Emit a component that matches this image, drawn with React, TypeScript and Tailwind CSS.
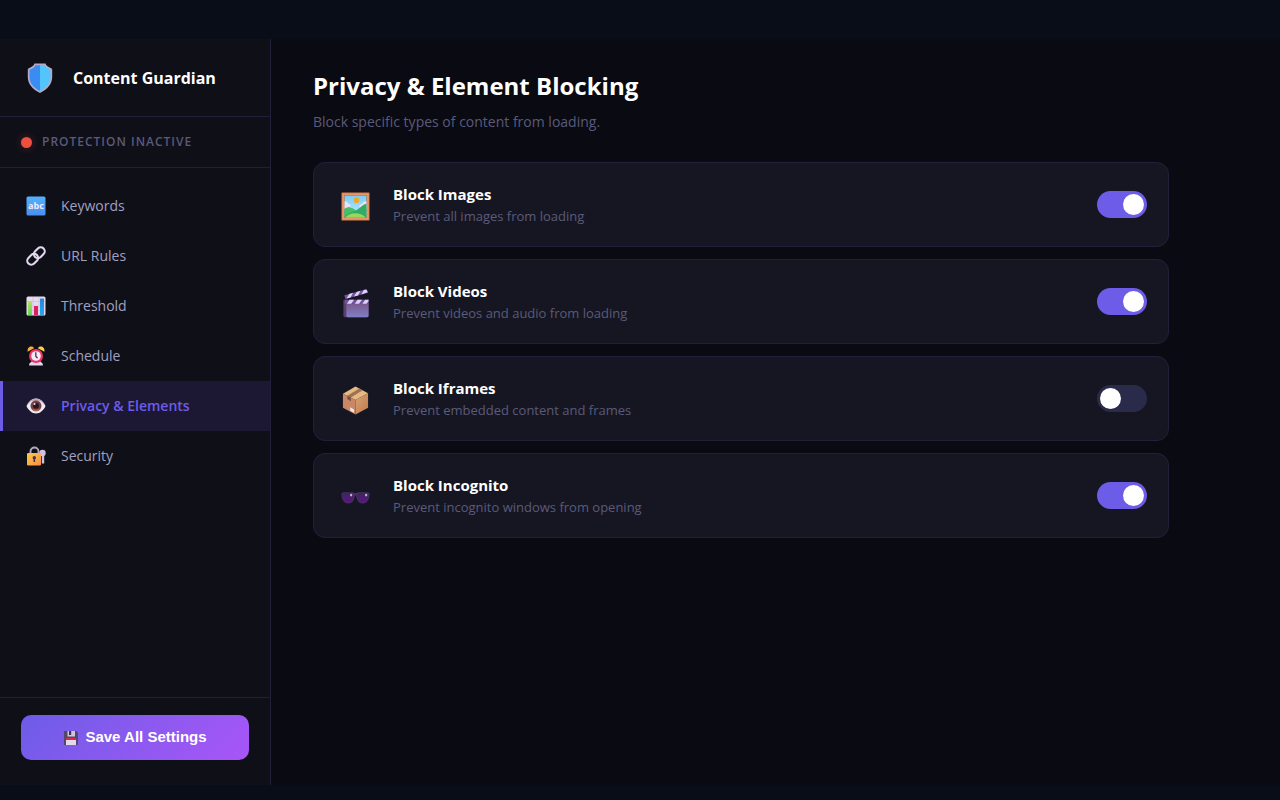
import { useState } from "react";
import type { ReactNode } from "react";
import clsx from "clsx";

function ShieldIcon() {
  return (
    <svg viewBox="0 0 32 32" className="size-8 shrink-0" aria-hidden="true">
      <path
        d="M10.500 1.500h11c.8 2 2.200 3.400 5.200 4.500.8.300 1.500.9 1.500 1.800v7.200c0 7-4.800 12.500-12.200 16C8.600 27.500 3.800 22 3.800 15V7.800c0-.9.7-1.500 1.500-1.800 3-1.100 4.400-2.500 5.200-4.500z"
        fill="#b5aac6"
      />
      <path
        d="M16 3.200h-4.500C10.500 5.500 8.500 6.800 5.500 7.800V15c0 6 4 10.700 10.500 14z"
        fill="#3b8cf2"
      />
      <path
        d="M16 3.200h4.500c1 2.300 3 3.600 6 4.600V15c0 6-4 10.700-10.500 14z"
        fill="#52c5ff"
      />
    </svg>
  );
}

function AbcIcon() {
  return (
    <svg viewBox="0 0 20 20" className="size-5" aria-hidden="true">
      <defs>
        <linearGradient id="abc" x1="0" y1="0" x2="0" y2="1">
          <stop offset="0" stopColor="#55b1fb" />
          <stop offset="1" stopColor="#4a8ef0" />
        </linearGradient>
      </defs>
      <rect x="0.5" y="0.5" width="19" height="19" rx="1.500" fill="url(#abc)" />
      <text
        x="10"
        y="13"
        textAnchor="middle"
        fill="#f1eafc"
        className="font-['Open_Sans',sans-serif] text-[9px] font-bold"
      >
        abc
      </text>
    </svg>
  );
}

function LinkIcon() {
  return (
    <svg viewBox="0 0 20 20" className="size-5" aria-hidden="true">
      <g
        transform="rotate(-45 10 10)"
        fill="none"
        stroke="#e4d8ee"
        strokeWidth="2.1"
      >
        <rect x="-0.7" y="6" width="12" height="8" rx="4" />
        <rect x="8.7" y="6" width="12" height="8" rx="4" />
      </g>
    </svg>
  );
}

function ChartIcon() {
  return (
    <svg viewBox="0 0 20 20" className="size-5" aria-hidden="true">
      <defs>
        <linearGradient id="barGreen" x1="0" y1="0" x2="0" y2="1">
          <stop offset="0" stopColor="#b1e35c" />
          <stop offset="1" stopColor="#64d35d" />
        </linearGradient>
        <linearGradient id="barBlue" x1="0" y1="0" x2="0" y2="1">
          <stop offset="0" stopColor="#2687d9" />
          <stop offset="1" stopColor="#2ba5ef" />
        </linearGradient>
      </defs>
      <rect x="0.5" y="0.5" width="19" height="19" rx="1.5" fill="#e7dcee" />
      <path
        d="M7 1v18M13 1v18M1 5.500h18M1 10h18M1 14.500h18"
        stroke="#cdbfd8"
        strokeWidth="0.7"
      />
      <rect x="2" y="5" width="4" height="14" rx="0.5" fill="url(#barGreen)" />
      <rect x="8" y="10" width="4" height="9" rx="0.5" fill="#db1f63" />
      <rect x="14" y="2.5" width="4" height="16.5" rx="0.5" fill="url(#barBlue)" />
    </svg>
  );
}

function ClockIcon() {
  return (
    <svg viewBox="0 0 20 20" className="size-5" aria-hidden="true">
      <path
        d="M1.600 5.700C1.200 2.600 3 .6 5.300.6c1.300 0 2.300.7 2.700 1.600z"
        fill="#f9ae35"
      />
      <path
        d="M18.400 5.700C18.800 2.600 17 .6 14.700.6c-1.300 0-2.300.7-2.700 1.600z"
        fill="#fbd443"
      />
      <path d="M5.500 15.500h9l2.300 2.300v1.700H3.200v-1.700z" fill="#e2d5f0" />
      <circle cx="10" cy="10" r="7" fill="#ee3562" />
      <circle cx="10" cy="10" r="4.8" fill="#f6ecf8" />
      <path
        d="M9.800 6.800v3.500l1.400 1.500"
        fill="none"
        stroke="#54395f"
        strokeWidth="1.4"
        strokeLinecap="round"
      />
    </svg>
  );
}

function EyeIcon() {
  return (
    <svg viewBox="0 0 20 20" className="size-5" aria-hidden="true">
      <path
        d="M.5 10.300C2.500 5.300 6 2.500 10 2.500s7.500 2.800 9.500 7.800c-2.400 4.700-5.700 7.200-9.500 7.200S2.900 15 .5 10.300z"
        fill="#f1eaf3"
      />
      <path
        d="M.5 10.300C2.500 5.300 6 2.500 10 2.500s7.500 2.800 9.500 7.800C17 6.200 14 4.200 10 4.200S3 6.200.5 10.300z"
        fill="#bca9c2"
      />
      <circle cx="10" cy="9.8" r="5.5" fill="#75403e" />
      <path d="M5.200 12.500a5.500 5.500 0 0 0 9.600 0c-2.800 1.500-6.800 1.500-9.600 0z" fill="#a9675a" />
      <circle cx="10" cy="9.8" r="3" fill="#2a1425" />
      <circle cx="8.5" cy="8" r="1.1" fill="#e9dce4" />
    </svg>
  );
}

function LockIcon() {
  return (
    <svg viewBox="0 0 20 20" className="size-5" aria-hidden="true">
      <defs>
        <linearGradient id="lock" x1="0" y1="0" x2="1" y2="1">
          <stop offset="0" stopColor="#fccb45" />
          <stop offset="1" stopColor="#f98a4b" />
        </linearGradient>
      </defs>
      <path
        d="M4.500 8V5.500a4 4 0 0 1 8 0V8"
        fill="none"
        stroke="#b5a8bd"
        strokeWidth="1.9"
      />
      <path d="M17 9v8.500" stroke="#cfc2e0" strokeWidth="2.4" />
      <circle cx="16.5" cy="7" r="3.2" fill="#cfc2e0" />
      <rect x="1" y="7" width="14" height="12.5" rx="1.3" fill="url(#lock)" />
      <circle cx="8.3" cy="11.7" r="1.7" fill="#41324f" />
      <path d="M7.500 12h1.600v4H7.500z" fill="#41324f" />
    </svg>
  );
}

function FloppyIcon() {
  return (
    <svg viewBox="0 0 16 16" className="size-4" aria-hidden="true">
      <path d="M1 1h12.500L15 2.500V15H1z" fill="#50496a" />
      <path d="M4.500 1h7.500v5.500H4.500z" fill="#cfc4e0" />
      <path d="M6 1h2.200v4H6z" fill="#3d3156" />
      <path d="M3 8h10v7H3z" fill="#e6d9ef" />
      <path d="M3 8h10v2H3z" fill="#d52c4c" />
    </svg>
  );
}

function PictureIcon() {
  return (
    <svg viewBox="0 0 30 30" className="size-[29px]" aria-hidden="true">
      <defs>
        <linearGradient id="sky" x1="0" y1="0" x2="0" y2="1">
          <stop offset="0" stopColor="#7ccdf6" />
          <stop offset="1" stopColor="#c0e9fb" />
        </linearGradient>
      </defs>
      <rect x="0.5" y="0.5" width="29" height="29" rx="0.5" fill="#d97a4b" />
      <rect x="1.5" y="1.5" width="27" height="27" fill="#ec9d6a" />
      <rect x="3" y="3" width="24" height="24" fill="#b96743" />
      <rect x="3.7" y="3.7" width="22.6" height="22.6" fill="url(#sky)" />
      <circle cx="16" cy="8.5" r="2.9" fill="#f6a51c" />
      <path d="M3.700 9.500c2.300 0 3.500 1.200 3.800 2.700 1.700.1 2.500 1 2.700 2.300l-6.500 3z" fill="#ebe2f8" />
      <path d="M26.300 9.500c-3 .2-4 1.300-4.400 3-1.900.2-3 1.300-3.200 3l7.600 2z" fill="#ebe2f8" />
      <path d="M3.700 17.500c4-2.500 7-1.500 11.800 1.700 3.500-2.200 6-5.700 10.800-7.400v14.500H3.700z" fill="#2fae63" />
      <path d="M3.700 17.500c4-2.500 7-1.500 11.800 1.700-3 1.600-8 2.500-11.800 6z" fill="#44bf68" />
      <path d="M4.500 26.300c3.700-5.300 15-6.500 21 0z" fill="#9ad75d" />
    </svg>
  );
}

function ClapperIcon() {
  return (
    <svg viewBox="0 0 30 30" className="size-[29px]" aria-hidden="true">
      <defs>
        <linearGradient id="board" x1="0" y1="0" x2="0" y2="1">
          <stop offset="0" stopColor="#79598c" />
          <stop offset="1" stopColor="#7f80c8" />
        </linearGradient>
      </defs>
      <path d="M3.500 6.500 25 .6c1.500-.3 2.200.3 2.500 1.500l.4 1.700L4.500 10.300z" fill="#75519c" />
      <path
        d="m8.500 5.100 4-1.100-2.600 4.800-4.200 1.100zM16.200 3l4-1.100-2.600 4.800-4.200 1.100zM23.500 1l2.700-.5 1.400 2.800-6.500 2.500z"
        fill="#dcd0fa"
      />
      <path d="M2.500 11h26v16.800c0 .9-.6 1.500-1.500 1.500H4c-.9 0-1.500-.6-1.500-1.500z" fill="#594069" />
      <path d="M5.500 15h23v12.800c0 .9-.6 1.500-1.500 1.500H7c-.9 0-1.500-.6-1.500-1.500z" fill="url(#board)" />
      <path d="M4 11.200h24.500v4H4z" fill="#75519c" />
      <path
        d="M9 11.200h4.500l-3 4H6zM17.200 11.200h4.500l-3 4h-4.500zM25 11.200h3.500v1.300l-2 2.700H22z"
        fill="#dcd0fa"
      />
    </svg>
  );
}

function PackageIcon() {
  return (
    <svg viewBox="0 0 30 30" className="size-[29px]" aria-hidden="true">
      <defs>
        <linearGradient id="boxRight" x1="0" y1="0" x2="1" y2="1">
          <stop offset="0" stopColor="#d9a276" />
          <stop offset="1" stopColor="#bd7c4c" />
        </linearGradient>
      </defs>
      <path d="M15 .5 28 7.500 15 14.500 2 8z" fill="#e5b982" />
      <path d="M2 8l13 6.500V29.500L2 22.500z" fill="#c98763" />
      <path d="M28 7.500 15 14.500v15l13-7z" fill="url(#boxRight)" />
      <path d="M19 2.600 22.500 4.500 10.200 11.900 6.500 10.100z" fill="#a26f55" />
      <path d="M6.500 10.100l3.700 1.800v4L6.500 13.500z" fill="#785047" />
      <path d="M9.500 22l4 2.200v3.500l-4-2.200z" fill="#eee3f2" />
    </svg>
  );
}

function GlassesIcon() {
  return (
    <svg viewBox="0 0 30 30" className="size-[29px]" aria-hidden="true">
      <defs>
        <linearGradient id="lens" x1="0" y1="0" x2="0" y2="1">
          <stop offset="0" stopColor="#3d2858" />
          <stop offset="1" stopColor="#5b1487" />
        </linearGradient>
      </defs>
      <path
        d="M.5 11.500c0-1.200 1-1.800 2.500-2h8c1.800 0 2.700.8 4 .8s2.200-.8 4-.8h8c1.500.2 2.500.8 2.500 2 .2 5-2.400 9.800-7 9.800-4 0-6.500-3.800-6.900-8.300h-1.200c-.4 4.500-2.900 8.300-6.900 8.300-4.600 0-7.200-4.800-7-9.800z"
        fill="#46325f"
      />
      <path
        d="M1.300 12c0-1 .8-1.800 2-1.800h7.500c1.700 0 2.600 1 2.400 2.500-.5 4.300-2.500 7.800-5.700 7.800-3.900 0-6.200-4.200-6.200-8.500zM28.700 12c0-1-.8-1.800-2-1.800h-7.500c-1.700 0-2.600 1-2.400 2.500.5 4.300 2.500 7.800 5.700 7.800 3.900 0 6.200-4.200 6.200-8.500z"
        fill="url(#lens)"
      />
      <ellipse cx="10.5" cy="12.5" rx="1.2" ry="1.5" fill="#bdb2d3" />
      <ellipse cx="26" cy="12.500" rx="1.2" ry="1.5" fill="#bdb2d3" />
    </svg>
  );
}

const NAV_ITEMS: { label: string; icon: ReactNode; active?: boolean }[] = [
  { label: "Keywords", icon: <AbcIcon /> },
  { label: "URL Rules", icon: <LinkIcon /> },
  { label: "Threshold", icon: <ChartIcon /> },
  { label: "Schedule", icon: <ClockIcon /> },
  { label: "Privacy & Elements", icon: <EyeIcon />, active: true },
  { label: "Security", icon: <LockIcon /> },
];

const BLOCKERS = [
  {
    id: "images",
    title: "Block Images",
    description: "Prevent all images from loading",
    icon: <PictureIcon />,
    on: true,
  },
  {
    id: "videos",
    title: "Block Videos",
    description: "Prevent videos and audio from loading",
    icon: <ClapperIcon />,
    on: true,
  },
  {
    id: "iframes",
    title: "Block Iframes",
    description: "Prevent embedded content and frames",
    icon: <PackageIcon />,
    on: false,
  },
  {
    id: "incognito",
    title: "Block Incognito",
    description: "Prevent incognito windows from opening",
    icon: <GlassesIcon />,
    on: true,
  },
];

function Toggle({ id, defaultOn }: { id: string; defaultOn: boolean }) {
  const [on, setOn] = useState(defaultOn);

  return (
    <input
      id={id}
      type="checkbox"
      role="switch"
      checked={on}
      onChange={(e) => setOn(e.target.checked)}
      className="flex h-[27px] w-[50px] shrink-0 cursor-pointer appearance-none items-center rounded-full bg-[#2a2a4a] px-[3px] before:size-[21px] before:rounded-full before:bg-white checked:justify-end checked:bg-[#6c5ce7]"
    />
  );
}

function Sidebar() {
  return (
    <aside className="flex w-[271px] shrink-0 flex-col border-r border-[#221f3a] bg-[#0f0f18]">
      <div className="flex h-[78px] items-center gap-[17px] border-b border-[#221f3a] px-6">
        <ShieldIcon />
        <span className="text-base font-bold text-white">Content Guardian</span>
      </div>
      <div className="flex h-[51px] items-center gap-2.5 border-b border-[#221f3a] px-[21px]">
        <span className="size-[11px] rounded-full bg-[#f04f3e] shadow-[0_0_8px_rgba(240,79,62,0.3)]" />
        <span className="text-xs font-semibold uppercase tracking-[1px] text-[#5a5a7a]">
          Protection Inactive
        </span>
      </div>
      <nav className="flex-1 pt-[13px]">
        {NAV_ITEMS.map((item) => (
          <a
            key={item.label}
            href="#"
            aria-current={item.active ? "page" : undefined}
            className={clsx(
              "flex h-[50px] items-center gap-[15px] border-l-[3px] pl-[23px] text-sm",
              item.active
                ? "border-[#6c5ce7] bg-[#1c1833] font-semibold text-[#6c5ce7]"
                : "border-transparent text-[#a0a0c0]",
            )}
          >
            {item.icon}
            {item.label}
          </a>
        ))}
      </nav>
      <div className="border-t border-[#221f3a] px-[21px] pt-[17px] pb-[25px]">
        <button
          type="button"
          className="flex h-[45px] w-full items-center justify-center gap-1.5 rounded-[10px] bg-linear-135 from-[#6c5ce7] to-[#a855f7] font-['Liberation_Sans',sans-serif] text-[15px] font-bold text-white"
        >
          <FloppyIcon />
          Save All Settings
        </button>
      </div>
    </aside>
  );
}

export default function App() {
  return (
    <div className="flex min-h-screen flex-col bg-[#080d18] pt-[39px] pb-[15px] font-['Open_Sans',sans-serif]">
      <div className="flex flex-1">
        <Sidebar />
        <main className="min-w-0 flex-1 bg-[#0a0a12] px-[42px] pt-[31px]">
          <div className="max-w-[856px]">
            <h1 className="text-2xl font-bold text-white">Privacy &amp; Element Blocking</h1>
            <p className="mt-2.5 text-sm text-[#5a5a7a]">
              Block specific types of content from loading.
            </p>
            <div className="mt-[30px] flex flex-col gap-3">
              {BLOCKERS.map((b) => (
                <div
                  key={b.id}
                  className="flex h-[85px] items-center rounded-xl border border-[#221f3a] bg-[#161622] pr-[21px] pl-[27px]"
                >
                  <div className="pt-1">{b.icon}</div>
                  <label htmlFor={b.id} className="ml-[23px] flex-1 cursor-pointer">
                    <span className="block text-[15px] leading-[22px] font-bold text-white">
                      {b.title}
                    </span>
                    <span className="block text-[13px] leading-[22px] text-[#5a5a7a]">
                      {b.description}
                    </span>
                  </label>
                  <Toggle id={b.id} defaultOn={b.on} />
                </div>
              ))}
            </div>
          </div>
        </main>
      </div>
    </div>
  );
}
